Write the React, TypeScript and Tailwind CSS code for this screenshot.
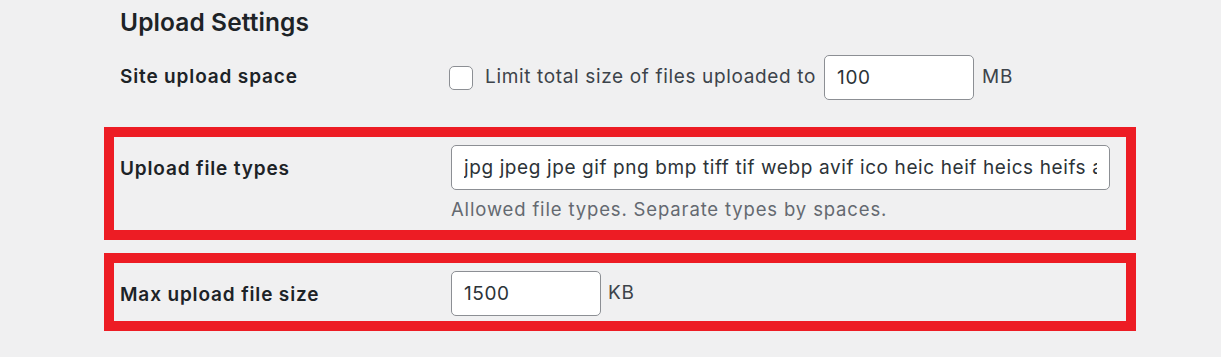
import React from 'react';

const fileTypes =
  'jpg jpeg jpe gif png bmp tiff tif webp avif ico heic heif heics heifs asf asx wmv wmx wm avi divx flv mov qt mpeg mpg mpe mp4 m4v ogv webm mkv 3gp 3gpp 3g2 3gp2 txt asc c cc h srt csv tsv ics rtx css htm html vtt dfxp mp3 m4a m4b aac ra ram wav ogg oga flac mid midi wma wax mka rtf js pdf class tar zip gz gzip rar 7z psd xcf doc pot pps ppt wri xla xls xlt xlw mdb mpp docx docm dotx dotm xlsx xlsm xlsb xltx xltm xlam pptx pptm ppsx ppsm potx potm ppam sldx sldm onetoc onetoc2 onetmp onepkg oxps xps odt odp ods odg odc odb odf wp wpd key numbers pages';

function TextField({ value, width }: { value: string; width: string }) {
  return (
    <input
      readOnly
      value={value}
      className={`${width} h-[45px] rounded-[5px] border border-[#8c8f94] bg-white px-[12px] text-[19px] tracking-[0.6px] text-[#2c3338] outline-none`}
    />
  );
}

export default function App() {
  return (
    <div
      className="h-[357px] w-full overflow-hidden bg-[#f0f0f1] text-[#1d2327]"
      style={{ fontFamily: 'Inter, "Noto Sans", sans-serif' }}
    >
      <div className="ml-[104px] w-[1032px] pt-[6px]">
        <h2 className="pl-[16px] text-[24.5px] font-semibold leading-[32px] tracking-[0.1px]">Upload Settings</h2>

        {/* Site upload space */}
        <div className="mt-[17px] flex h-[45px] items-center pl-[16px]">
          <div className="w-[331px] text-[19px] font-semibold tracking-[0.85px]">Site upload space</div>
          <div className="flex items-center text-[19px] tracking-[0.65px] text-[#3c434a]">
            <span className="ml-[-2px] mr-[12px] h-[24px] w-[24px] rounded-[5px] border border-[#8c8f94] bg-white" />
            <span>Limit total size of files uploaded to</span>
            <TextField value="100" width="ml-[8px] w-[150px]" />
            <span className="ml-[8px]">MB</span>
          </div>
        </div>

        {/* Upload file types */}
        <div className="mt-[27px] border-[10px] border-[#ed1c24] pl-[6px] pt-[8px] pb-[10px]">
          <div className="flex">
            <div className="flex h-[45px] w-[331px] items-center pt-[3px] text-[19px] font-semibold tracking-[0.85px]">
              Upload file types
            </div>
            <div className="flex flex-col">
              <TextField value={fileTypes} width="w-[659px]" />
              <p className="mt-[8px] text-[18.5px] leading-[22px] tracking-[0.85px] text-[#646970]">
                Allowed file types. Separate types by spaces.
              </p>
            </div>
          </div>
        </div>

        {/* Max upload file size */}
        <div className="mt-[13px] border-[10px] border-[#ed1c24] pl-[6px] pt-[8px] pb-[5px]">
          <div className="flex items-center">
            <div className="w-[331px] pt-[3px] text-[19px] font-semibold tracking-[0.85px]">Max upload file size</div>
            <TextField value="1500" width="w-[150px]" />
            <span className="ml-[7px] text-[19px] tracking-[0.65px] text-[#3c434a]">KB</span>
          </div>
        </div>
      </div>
    </div>
  );
}
